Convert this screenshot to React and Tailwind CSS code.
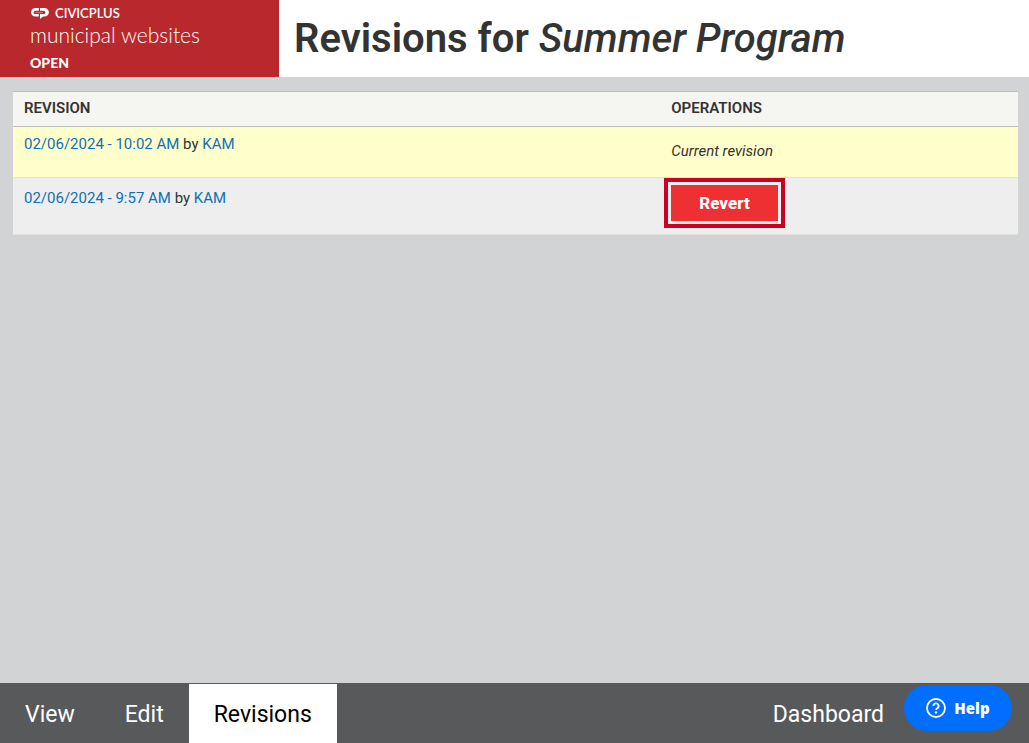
import React from 'react';

const revisions = [
  { id: 2, date: '02/06/2024 - 10:02 AM', author: 'KAM', current: true },
  { id: 1, date: '02/06/2024 - 9:57 AM', author: 'KAM', current: false },
];

const tabs = [
  { label: 'View' },
  { label: 'Edit' },
  { label: 'Revisions', active: true },
];

const CivicPlusMark = () => (
  <svg width="19" height="12" viewBox="0 0 19 12" fill="#fff" aria-hidden="true">
    <path d="M8.8 1H5.3a4.3 4.3 0 0 0 0 8.6h3.5V7H5.2a1.5 1.5 0 0 1 0-3.2h3.6Z" />
    <path d="M10 1h4.6a4.3 4.3 0 0 1 0 8.6h-1.4L10 12V7h3.8a1.5 1.5 0 0 0 0-3.2H10Z" />
    <path d="M5.5 4.9h7.5v1H5.5Z" opacity="0.4" />
  </svg>
);

const Brand = () => (
  <a
    href="#"
    className="flex w-[279px] shrink-0 flex-col bg-[#b9282c] pt-1.5 pl-[30px] text-white"
  >
    <span className="flex items-center gap-1.5 font-['Lato',sans-serif] text-[13px] leading-[14px] font-semibold">
      <CivicPlusMark />
      CIVICPLUS
    </span>
    <span className="font-['Lato',sans-serif] text-[21px] leading-[30px] font-light">
      municipal websites
    </span>
    <span className="font-['Lato',sans-serif] text-sm leading-[26px] font-black">OPEN</span>
  </a>
);

const RevisionRow = ({ revision }) => (
  <tr
    className={
      revision.current
        ? 'h-[51px] border-b border-[#e3e3dc] bg-[#ffffcc]'
        : 'h-[57px] border-b border-[#e0e0dc] bg-[#eeeeee]'
    }
  >
    <td className={revision.current ? 'px-[11px] pt-[7px] align-top' : 'px-[11px] pt-2.5 align-top'}>
      <a href="#" className="text-[#0f70b7]">{revision.date}</a>
      {' by '}
      <a href="#" className="text-[#0f70b7]">{revision.author}</a>
    </td>
    <td className={revision.current ? 'px-[11px] pt-3.5 align-top' : 'px-[11px] pt-[7px] align-top'}>
      {revision.current ? (
        <em className="block">Current revision</em>
      ) : (
        <button
          type="button"
          className="block h-9 bg-[#ee3033] px-7 text-[17px] font-extrabold text-white outline-4 outline-offset-[3px] outline-[#cc0022]"
        >
          Revert
        </button>
      )}
    </td>
  </tr>
);

const HelpIcon = () => (
  <svg width="20" height="20" viewBox="0 0 20 20" fill="none" stroke="#fff" strokeWidth="1.8" aria-hidden="true">
    <circle cx="10" cy="10" r="9" />
    <path d="M7.4 8a2.6 2.6 0 1 1 3.9 2.2c-.8.5-1.3.9-1.3 1.8" />
    <circle cx="10" cy="14.4" r="1.2" fill="#fff" stroke="none" />
  </svg>
);

const App = () => (
  <div className="flex min-h-screen flex-col bg-[#d1d3d4] font-['Roboto',sans-serif] text-[#333333]">
    <header className="flex h-[77px] bg-white">
      <Brand />
      <h1 className="pt-[9px] pl-[15px] text-[40px] leading-[60px] font-semibold">
        Revisions for <em className="font-medium">Summer Program</em>
      </h1>
    </header>

    <main className="grow pt-3.5 pr-[11px] pl-[13px]">
      <table className="w-full table-fixed border-collapse text-[15px] leading-5">
        <thead>
          <tr className="h-[35px] border-y border-[#bebfb9] bg-[#f5f5f1] text-left">
            <th scope="col" className="w-[64.4%] px-[11px] pb-0.5 font-semibold">REVISION</th>
            <th scope="col" className="px-[11px] pb-0.5 font-semibold">OPERATIONS</th>
          </tr>
        </thead>
        <tbody>
          {revisions.map((revision) => (
            <RevisionRow key={revision.id} revision={revision} />
          ))}
        </tbody>
      </table>
    </main>

    <footer className="flex h-[60px] justify-between bg-[#58595b] pt-px text-[23px] leading-[61px] text-white">
      <nav className="flex">
        {tabs.map((tab) => (
          <a
            key={tab.label}
            href="#"
            aria-current={tab.active ? 'page' : undefined}
            className={tab.active ? 'h-[59px] bg-white px-[25px] text-black' : 'h-[59px] px-[25px]'}
          >
            {tab.label}
          </a>
        ))}
      </nav>
      <a href="#" className="h-[59px] pr-[145px]">Dashboard</a>
    </footer>

    <button
      type="button"
      className="fixed right-[17px] bottom-3 flex h-[46px] w-[108px] items-center justify-center gap-2 rounded-full bg-[#006eff] font-['Open_Sans',sans-serif] text-[15px] font-extrabold text-white"
    >
      <HelpIcon />
      Help
    </button>
  </div>
);

export default App;
